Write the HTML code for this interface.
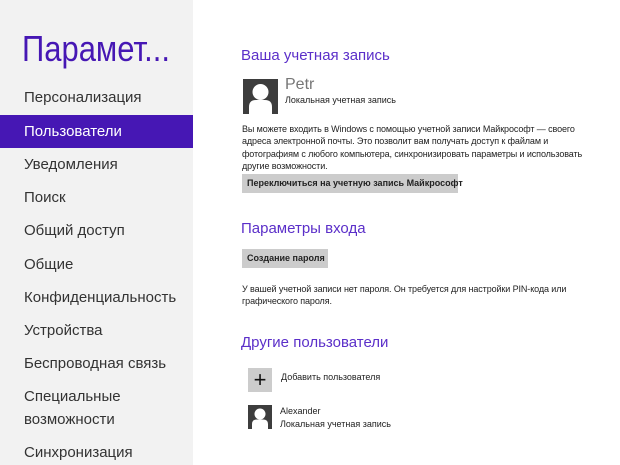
<!DOCTYPE html>
<html><head><meta charset="utf-8"><style>
body{margin:0;width:620px;height:465px;overflow:hidden;background:#fff;font-family:"Liberation Sans","DejaVu Sans",sans-serif;position:relative}
.side{position:absolute;left:0;top:0;width:193px;height:465px;background:#f2f2f2}
.a{position:absolute;white-space:nowrap}
.it{left:24px;font-size:15px;color:#333;line-height:20px}
.sel{position:absolute;left:0;top:115px;width:193px;height:33px;background:#4617b4}
h{position:absolute;left:241px;font-size:15px;color:#5b2fc9;white-space:nowrap}
.s{font-size:9px;color:#222}
.btn{position:absolute;background:#cccccc;font-size:9px;font-weight:bold;color:#222;line-height:19px;padding-left:5px;white-space:nowrap}
.av{position:absolute;background:#3d3d3d;overflow:hidden}
</style></head><body>
<div class="side"></div>
<div class="sel"></div>
<div class="a" style="left:22px;top:28px;font-size:36px;color:#4617b4;transform:scaleX(0.86);transform-origin:left">Парамет...</div>
<div class="a it" style="top:88px">Персонализация</div>
<div class="a it" style="top:122px;color:#fff">Пользователи</div>
<div class="a it" style="top:155px">Уведомления</div>
<div class="a it" style="top:188px">Поиск</div>
<div class="a it" style="top:221px">Общий доступ</div>
<div class="a it" style="top:255px">Общие</div>
<div class="a it" style="top:288px">Конфиденциальность</div>
<div class="a it" style="top:321px">Устройства</div>
<div class="a it" style="top:354px">Беспроводная связь</div>
<div class="a it" style="top:387px">Специальные</div>
<div class="a it" style="top:410px">возможности</div>
<div class="a it" style="top:443px">Синхронизация</div>

<h style="top:47px">Ваша учетная запись</h>
<div class="av" style="left:243px;top:79px;width:35px;height:35px"><svg width="35" height="35"><circle cx="17.5" cy="13" r="8" fill="#fff"/><path d="M6 35 V28 Q6 21 13 21 H22 Q29 21 29 28 V35Z" fill="#fff"/></svg></div>
<div class="a" style="left:285px;top:76px;font-size:16px;color:#777">Petr</div>
<div class="a s" style="left:285px;top:95px">Локальная учетная запись</div>
<div class="a s" style="left:242px;top:123px;line-height:12.3px;letter-spacing:-0.1px">Вы можете входить в Windows с помощью учетной записи Майкрософт — своего<br>адреса электронной почты. Это позволит вам получать доступ к файлам и<br>фотографиям с любого компьютера, синхронизировать параметры и использовать<br>другие возможности.</div>
<div class="btn" style="left:242px;top:174px;width:211px">Переключиться на учетную запись Майкрософт</div>

<h style="top:220px">Параметры входа</h>
<div class="btn" style="left:242px;top:249px;width:81px">Создание пароля</div>
<div class="a s" style="left:242px;top:283px;line-height:12.3px;letter-spacing:-0.1px">У вашей учетной записи нет пароля. Он требуется для настройки PIN-кода или<br>графического пароля.</div>

<h style="top:334px">Другие пользователи</h>
<div class="a" style="left:248px;top:368px;width:24px;height:24px;background:#ccc;font-size:22px;line-height:24px;text-align:center;color:#111">+</div>
<div class="a s" style="left:281px;top:372px">Добавить пользователя</div>
<div class="av" style="left:248px;top:405px;width:24px;height:24px"><svg width="24" height="24"><circle cx="12" cy="9" r="5.5" fill="#fff"/><path d="M4 24 V19 Q4 14.5 9 14.5 H15 Q20 14.5 20 19 V24Z" fill="#fff"/></svg></div>
<div class="a s" style="left:280px;top:406px">Alexander</div>
<div class="a s" style="left:280px;top:419px">Локальная учетная запись</div>
</body></html>
